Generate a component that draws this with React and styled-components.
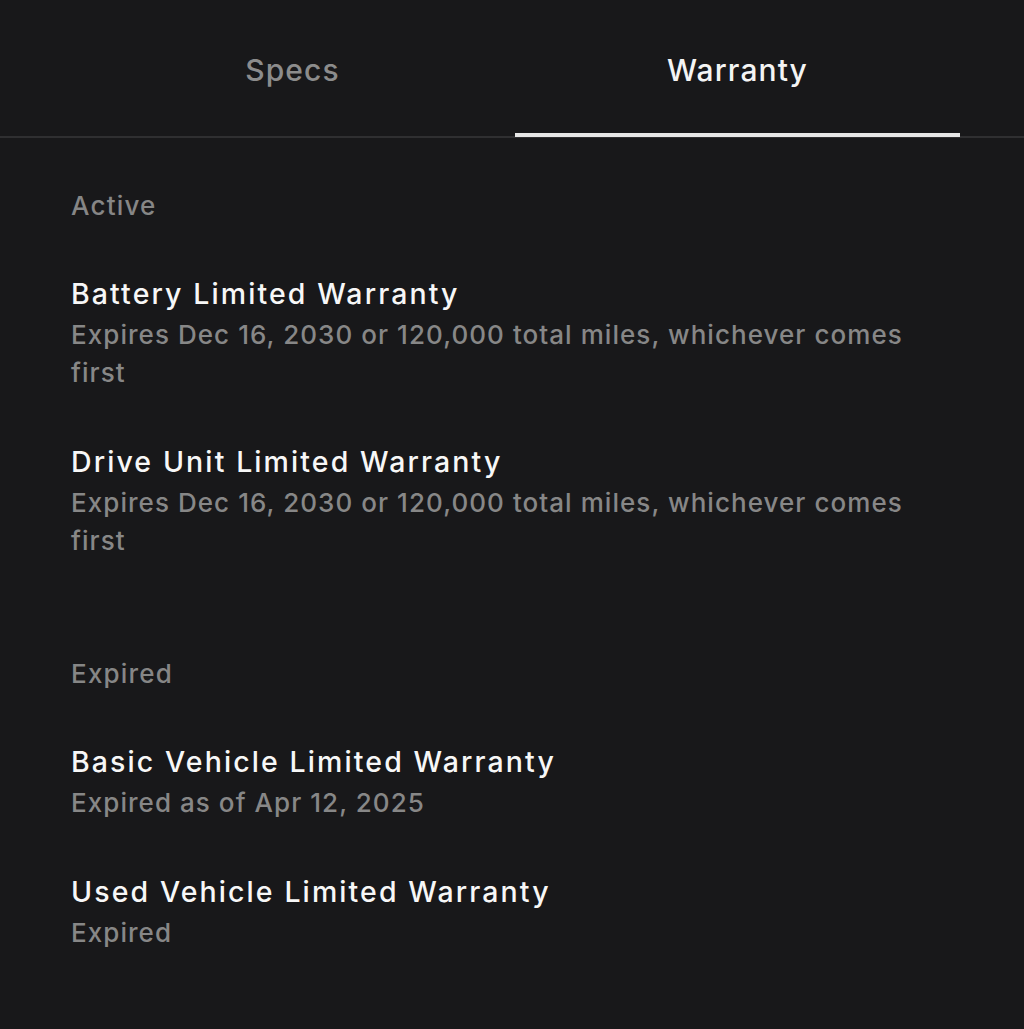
import React from "react";
import styled, { createGlobalStyle } from "styled-components";

const Global = createGlobalStyle`
  html, body { margin: 0; padding: 0; background: #18181a; }
  body { font-family: Inter, "Open Sans", sans-serif; -webkit-font-smoothing: antialiased; }
`;

const Page = styled.div`
  min-height: 1029px;
  background: #18181a;
  color: #fff;
`;

const TabBar = styled.div`
  display: grid;
  grid-template-columns: 1fr 1fr;
  padding: 0 64px 0 70px;
  height: 136px;
  border-bottom: 2px solid #2f2f31;
`;

const Tab = styled.div`
  position: relative;
  display: flex;
  align-items: center;
  justify-content: center;
  padding-top: 4px;
  font-size: 30px;
  font-weight: 500;
  letter-spacing: 1.1px;
  color: ${(p) => (p.$active ? "#f4f4f4" : "#8c8c8c")};
  &::after {
    content: "";
    display: ${(p) => (p.$active ? "block" : "none")};
    position: absolute;
    left: 0;
    right: 0;
    bottom: -1px;
    height: 4px;
    background: #e6e6e6;
  }
`;

const Content = styled.div`
  padding: 49px 70px 0 71px;
  display: flex;
  flex-direction: column;
  gap: 95px;
`;

const Section = styled.section`
  display: flex;
  flex-direction: column;
  gap: 50px;
`;

const Label = styled.div`
  font-size: 26px;
  line-height: 37px;
  font-weight: 500;
  letter-spacing: 1.2px;
  color: #868686;
`;

const Item = styled.div`
  display: flex;
  flex-direction: column;
  gap: 2px;
`;

const Title = styled.div`
  font-size: 28.5px;
  line-height: 40px;
  font-weight: 500;
  letter-spacing: 2.1px;
  color: #f7f7f7;
`;

const Sub = styled.div`
  font-size: 26px;
  line-height: 38px;
  font-weight: 500;
  letter-spacing: 1.05px;
  color: #878787;
  max-width: 860px;
`;

const data = [
  {
    label: "Active",
    items: [
      ["Battery Limited Warranty", "Expires Dec 16, 2030 or 120,000 total miles, whichever comes first"],
      ["Drive Unit Limited Warranty", "Expires Dec 16, 2030 or 120,000 total miles, whichever comes first"],
    ],
  },
  {
    label: "Expired",
    items: [
      ["Basic Vehicle Limited Warranty", "Expired as of Apr 12, 2025"],
      ["Used Vehicle Limited Warranty", "Expired"],
    ],
  },
];

export default function App() {
  return (
    <Page>
      <Global />
      <TabBar>
        <Tab>Specs</Tab>
        <Tab $active>Warranty</Tab>
      </TabBar>
      <Content>
        {data.map((s) => (
          <Section key={s.label}>
            <Label>{s.label}</Label>
            {s.items.map(([t, d]) => (
              <Item key={t}>
                <Title>{t}</Title>
                <Sub>{d}</Sub>
              </Item>
            ))}
          </Section>
        ))}
      </Content>
    </Page>
  );
}
